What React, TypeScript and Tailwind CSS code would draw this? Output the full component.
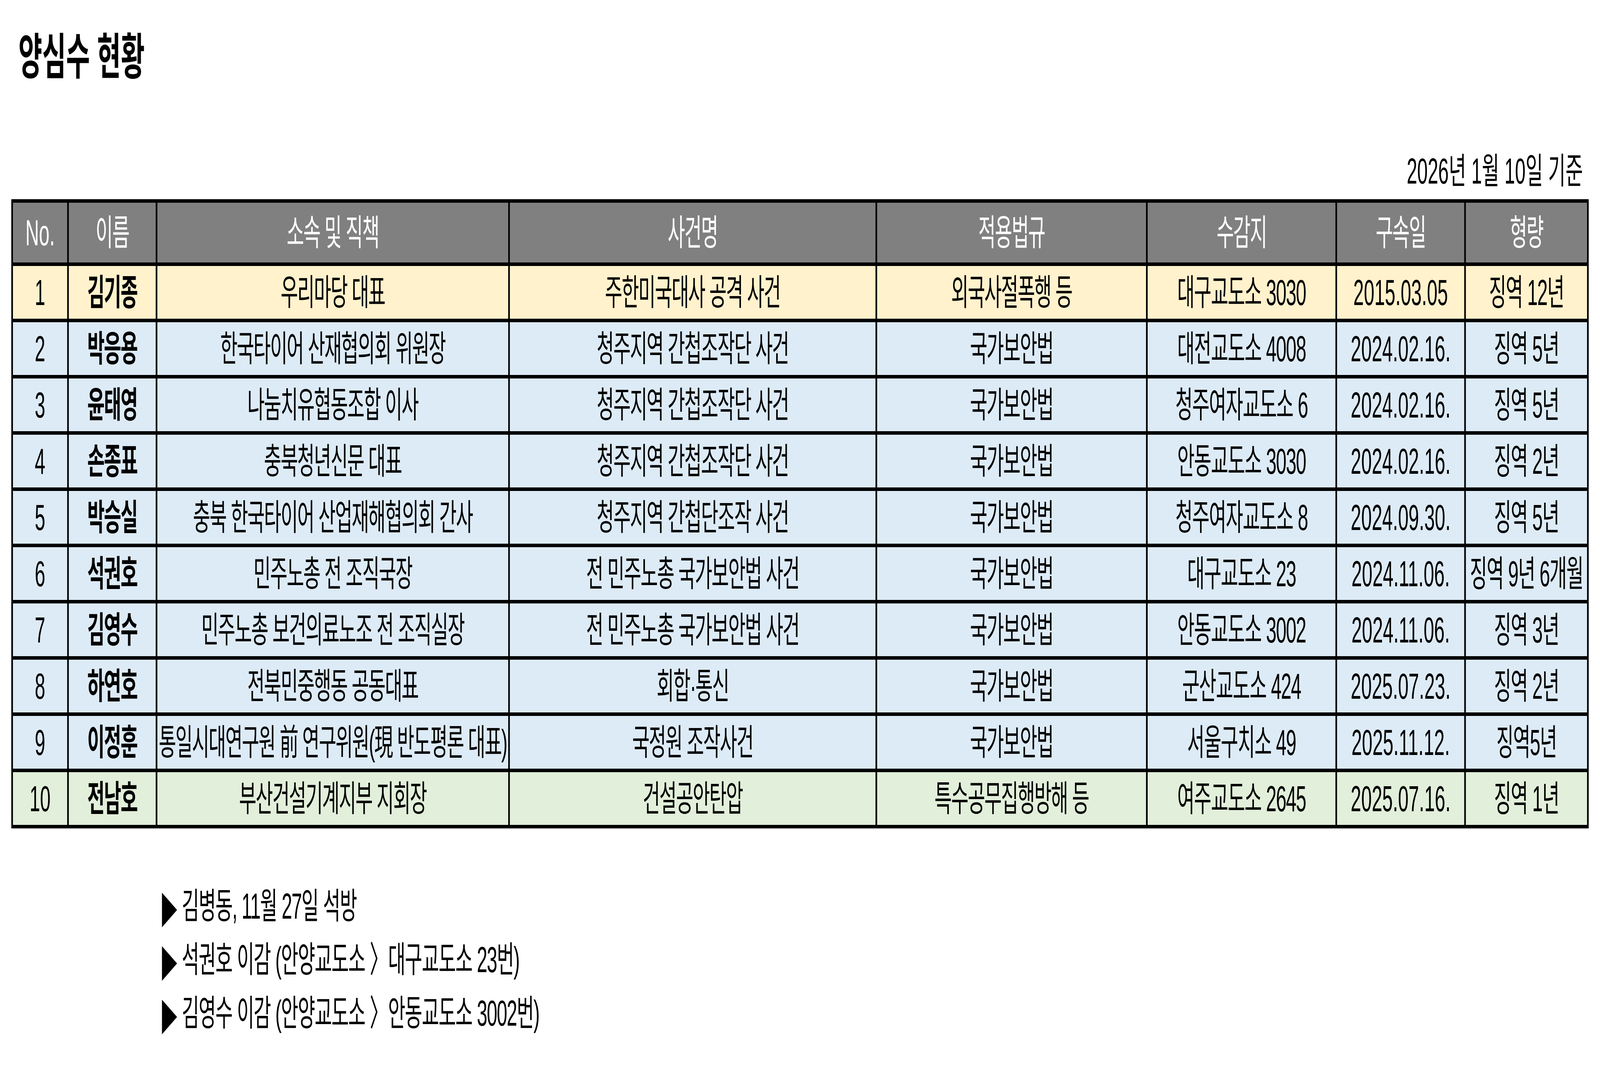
import { useLayoutEffect, useState, type ReactNode } from "react";

type Row = {
  no: string;
  name: string;
  org: string;
  caseName: string;
  law: string;
  prison: string;
  date: string;
  term: string;
  bg: string;
};

const PAGE_W = 7789;

const HEADERS = ["No.", "이름", "소속 및 직책", "사건명", "적용법규", "수감지", "구속일", "형량"];

const BLUE = "bg-[#DDEBF7]";

const ROWS: Row[] = [
  { no: "1", name: "김기종", org: "우리마당 대표", caseName: "주한미국대사 공격 사건", law: "외국사절폭행 등", prison: "대구교도소 3030", date: "2015.03.05", term: "징역 12년", bg: "bg-[#FFF2CC]" },
  { no: "2", name: "박응용", org: "한국타이어 산재협의회 위원장", caseName: "청주지역 간첩조작단 사건", law: "국가보안법", prison: "대전교도소 4008", date: "2024.02.16.", term: "징역 5년", bg: BLUE },
  { no: "3", name: "윤태영", org: "나눔치유협동조합 이사", caseName: "청주지역 간첩조작단 사건", law: "국가보안법", prison: "청주여자교도소 6", date: "2024.02.16.", term: "징역 5년", bg: BLUE },
  { no: "4", name: "손종표", org: "충북청년신문 대표", caseName: "청주지역 간첩조작단 사건", law: "국가보안법", prison: "안동교도소 3030", date: "2024.02.16.", term: "징역 2년", bg: BLUE },
  { no: "5", name: "박승실", org: "충북 한국타이어 산업재해협의회 간사", caseName: "청주지역 간첩단조작 사건", law: "국가보안법", prison: "청주여자교도소 8", date: "2024.09.30.", term: "징역 5년", bg: BLUE },
  { no: "6", name: "석권호", org: "민주노총 전 조직국장", caseName: "전 민주노총 국가보안법 사건", law: "국가보안법", prison: "대구교도소 23", date: "2024.11.06.", term: "징역 9년 6개월", bg: BLUE },
  { no: "7", name: "김영수", org: "민주노총 보건의료노조 전 조직실장", caseName: "전 민주노총 국가보안법 사건", law: "국가보안법", prison: "안동교도소 3002", date: "2024.11.06.", term: "징역 3년", bg: BLUE },
  { no: "8", name: "하연호", org: "전북민중행동 공동대표", caseName: "회합·통신", law: "국가보안법", prison: "군산교도소 424", date: "2025.07.23.", term: "징역 2년", bg: BLUE },
  { no: "9", name: "이정훈", org: "통일시대연구원 前 연구위원(現 반도평론 대표)", caseName: "국정원 조작사건", law: "국가보안법", prison: "서울구치소 49", date: "2025.11.12.", term: "징역5년", bg: BLUE },
  { no: "10", name: "전남호", org: "부산건설기계지부 지회장", caseName: "건설공안탄압", law: "특수공무집행방해 등", prison: "여주교도소 2645", date: "2025.07.16.", term: "징역 1년", bg: "bg-[#E2EFDA]" },
];

const NOTES = [
  "김병동, 11월 27일 석방",
  "석권호 이감 (안양교도소 〉대구교도소 23번)",
  "김영수 이감 (안양교도소 〉안동교도소 3002번)",
];

function Cell({ children, className }: { children: ReactNode; className: string }) {
  return (
    <div className={`flex items-center justify-center whitespace-nowrap ${className}`}>
      <span>{children}</span>
    </div>
  );
}

export default function App() {
  // the sheet is laid out at its native 7789px; squeeze it to whatever width the window really has
  const [sx, setSx] = useState(1);

  useLayoutEffect(() => {
    const fit = () => setSx(Math.min(1, document.documentElement.clientWidth / PAGE_W));
    fit();
    window.addEventListener("resize", fit);
    return () => window.removeEventListener("resize", fit);
  }, []);

  return (
    <div className="h-[2737px] w-full overflow-hidden bg-white">
      <div
        className="h-[2737px] w-[7789px] origin-top-left text-black font-['Liberation_Sans','Noto_Sans_CJK_KR',sans-serif]"
        style={{ transform: `scaleX(${sx})` }}
      >
        <h1 className="pl-[90px] pt-[84px] text-[126px] font-bold leading-none">양심수 현황</h1>

        <div className="ml-[55px] w-[7679px]">
          <p className="mt-[182px] pr-[28px] text-right text-[92px] leading-none">2026년 1월 10일 기준</p>

          <div className="mt-[26px] grid grid-cols-[264px_423px_1708px_1780px_1309px_914px_619px_590px] gap-x-[8px] gap-y-[9px] bg-black px-[8px] py-[9px] text-[92px] leading-none">
            {HEADERS.map((h) => (
              <Cell key={h} className={`h-[153px] bg-[#808080] text-white ${h === "No." ? "" : "tracking-[-0.04em]"}`}>
                {h}
              </Cell>
            ))}
            {ROWS.map((r) => (
              <div key={r.no} className="contents">
                <Cell className={`h-[135px] ${r.bg}`}>{r.no}</Cell>
                <Cell className={`h-[135px] font-bold tracking-[-0.04em] ${r.bg}`}>{r.name}</Cell>
                <Cell className={`h-[135px] tracking-[-0.04em] ${r.bg}`}>{r.org}</Cell>
                <Cell className={`h-[135px] tracking-[-0.04em] ${r.bg}`}>{r.caseName}</Cell>
                <Cell className={`h-[135px] tracking-[-0.04em] ${r.bg}`}>{r.law}</Cell>
                <Cell className={`h-[135px] tracking-[-0.03em] ${r.bg}`}>{r.prison}</Cell>
                <Cell className={`h-[135px] ${r.bg}`}>{r.date}</Cell>
                <Cell className={`h-[135px] tracking-[-0.03em] ${r.bg}`}>{r.term}</Cell>
              </div>
            ))}
          </div>
        </div>

        <ul className="ml-[788px] mt-[130px] text-[92px]">
          {NOTES.map((n) => (
            <li key={n} className="flex h-[137px] items-center">
              <span className="inline-block w-[97px] origin-left scale-x-[0.83] font-['DejaVu_Sans'] text-[116px] leading-none">
                ▶
              </span>
              <span className="leading-none tracking-[-0.03em]">{n}</span>
            </li>
          ))}
        </ul>
      </div>
    </div>
  );
}
